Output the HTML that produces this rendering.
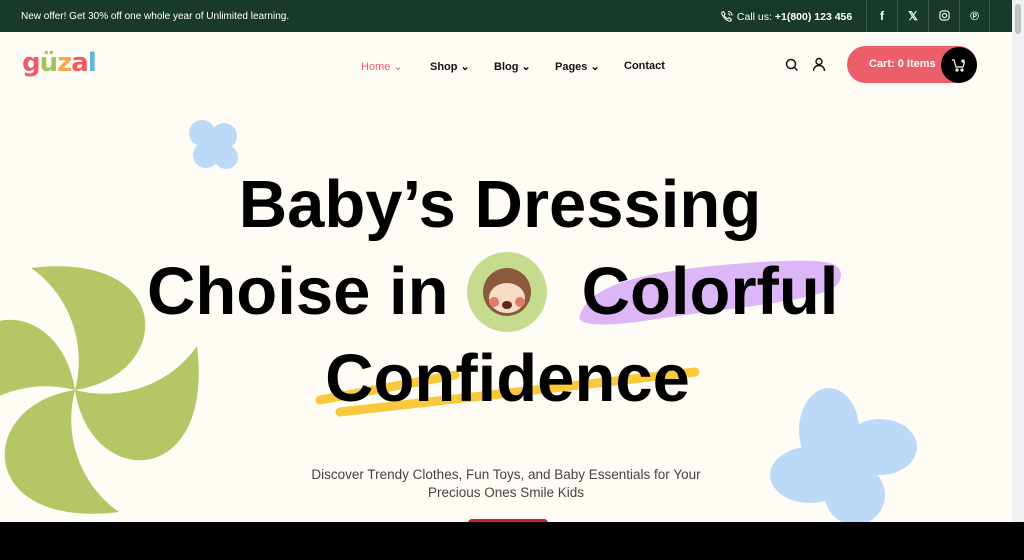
<!DOCTYPE html>
<html><head><meta charset="utf-8"><style>
*{margin:0;padding:0;box-sizing:border-box}
body{width:1024px;height:560px;overflow:hidden;background:#fffcf6;font-family:"Liberation Sans",sans-serif;position:relative}
.top{position:absolute;left:0;top:0;width:1012px;height:32px;background:#173a2a;color:#fff;font-size:10px}
.top .offer{position:absolute;left:21px;top:11px}
.top .call{position:absolute;left:720px;top:10px;font-size:10.5px}
.soc{position:absolute;top:0;width:31px;height:32px;border-left:1px solid #3d5a4c;color:#fff;text-align:center;line-height:32px;font-size:12px;font-weight:bold}
.sb{position:absolute;right:0;top:0;width:12px;height:522px;background:#f1f1f1}
.sb div{position:absolute;left:3px;top:4px;width:6px;height:30px;background:#c1c1c1;border-radius:3px}
.nav a{position:absolute;top:60px;font-size:11px;font-weight:bold;color:#111}
.h{position:absolute;font-weight:bold;font-size:67px;line-height:80px;color:#000;font-family:"Liberation Sans",sans-serif;white-space:nowrap}
.sub{position:absolute;left:0;width:1012px;top:466px;text-align:center;font-size:13.5px;color:#444;line-height:18px}
.bot{position:absolute;left:0;top:522px;width:1024px;height:38px;background:#000}
</style></head><body>
<div class="top"><span class="offer">New offer! Get 30% off one whole year of Unlimited learning.</span>
<span class="call"><svg width="14" height="13" viewBox="0 0 14 14" style="vertical-align:-3px" fill="none" stroke="#fff" stroke-width="1.1"><path d="M3 1.5l2 2.5-1.2 1.5c.8 1.8 2.2 3.2 4 4l1.5-1.2 2.5 2-1.3 1.8C6.5 12 2 7.5 1.2 2.8z"/><path d="M8 1.5a4.5 4.5 0 0 1 4.5 4.5M8 4a2 2 0 0 1 2 2"/></svg> Call us: <b>+1(800) 123 456</b></span>
<div class="soc" style="left:866px">f</div><div class="soc" style="left:897px">𝕏</div>
<div class="soc" style="left:928px"><svg width="11" height="11" viewBox="0 0 12 12" fill="none" stroke="#fff" stroke-width="1.2" style="margin-top:10px"><rect x="1" y="1" width="10" height="10" rx="3"/><circle cx="6" cy="6" r="2.3"/></svg></div>
<div class="soc" style="left:959px;border-right:1px solid #3d5a4c">℗</div></div>
<div class="sb"><div></div></div>
<div style="position:absolute;left:22px;top:48px;font-size:26px;font-weight:bold;font-family:'DejaVu Sans',sans-serif;letter-spacing:-1px"><span style="color:#ee5b6a">g</span><span style="color:#a6c25a">ü</span><span style="color:#f7a94a">z</span><span style="color:#ef5a5f">a</span><span style="color:#5cb5e3">l</span></div>
<div class="nav"><a style="left:361px;color:#ee5b6a;font-weight:normal">Home ⌄</a><a style="left:430px">Shop ⌄</a><a style="left:494px">Blog ⌄</a><a style="left:555px">Pages ⌄</a><a style="left:624px">Contact</a></div>
<svg style="position:absolute;left:785px;top:58px" width="14" height="14" viewBox="0 0 14 14" fill="none" stroke="#111" stroke-width="1.5"><circle cx="6" cy="6" r="4.5"/><path d="M9.5 9.5l3 3"/></svg>
<svg style="position:absolute;left:812px;top:57px" width="14" height="15" viewBox="0 0 14 15" fill="none" stroke="#111" stroke-width="1.4"><circle cx="7" cy="4.5" r="3"/><path d="M1.5 14c0-3.5 2.5-5.5 5.5-5.5s5.5 2 5.5 5.5"/></svg>
<div style="position:absolute;left:847px;top:46px;width:130px;height:37px;border-radius:19px;background:#ec5e69;color:#fff;font-size:11px;font-weight:bold;line-height:37px;padding-left:22px">Cart: 0 Items</div>
<div style="position:absolute;left:941px;top:47px;width:36px;height:36px;border-radius:50%;background:#000"><svg width="16" height="14" viewBox="0 0 16 14" fill="none" stroke="#fff" stroke-width="1.2" style="margin:11px 10px"><path d="M1 2h2l2 7h7l1.5-5"/><circle cx="6" cy="12" r="1"/><circle cx="11" cy="12" r="1"/><path d="M12 1v4M10 3h4"/></svg></div>
<svg style="position:absolute;left:0;top:0" width="1012" height="522">
<g fill="#bcd9f7"><circle cx="202" cy="133" r="13"/><circle cx="224" cy="136" r="13"/><circle cx="206" cy="155" r="13"/><circle cx="226" cy="157" r="12"/><circle cx="214" cy="146" r="14"/></g>
<g fill="#bcd9f7"><ellipse cx="829" cy="430" rx="30" ry="42"/><ellipse cx="880" cy="447" rx="37" ry="28"/><ellipse cx="810" cy="475" rx="40" ry="28"/><ellipse cx="855" cy="495" rx="30" ry="30"/><circle cx="842" cy="462" r="35"/></g>
<g fill="#b5c667" transform="translate(75,390)">
<path id="bl" d="M0,0 C100,-15 100,-140 -44,-122 C-5,-95 12,-45 0,0Z"/>
<use href="#bl" transform="rotate(90)"/>
<use href="#bl" transform="rotate(180)"/>
<use href="#bl" transform="rotate(270)"/>
</g>
<path d="M580,315 C590,285 640,270 760,262 C830,258 845,262 840,280 C835,300 750,305 650,320 C600,328 575,325 580,315Z" fill="#dcb6f7"/>
<path d="M320,400 L455,375 M340,412 L695,372" stroke="#f8c93a" stroke-width="9" stroke-linecap="round"/>
<circle cx="507" cy="292" r="40" fill="#c5dc8f"/>
<circle cx="507" cy="292" r="24" fill="#8b5a3c"/><ellipse cx="507" cy="298" rx="18" ry="15" fill="#f6dcc6"/>
<circle cx="494" cy="302" r="5" fill="#e27a68"/><circle cx="520" cy="302" r="5" fill="#e27a68"/><ellipse cx="507" cy="305" rx="5" ry="4" fill="#5a2a1a"/>
</svg>
<div class="h" style="top:165px;left:0;width:1000px;text-align:center">Baby’s Dressing</div>
<div class="h" style="top:252px;left:147px;width:298px;text-align:center">Choise in</div>
<div class="h" style="top:252px;left:578px;width:264px;text-align:center">Colorful</div>
<div class="h" style="top:339px;left:310px;width:395px;text-align:center">Confidence</div>
<div class="sub">Discover Trendy Clothes, Fun Toys, and Baby Essentials for Your<br>Precious Ones Smile Kids</div>
<div style="position:absolute;left:468px;top:519px;width:80px;height:6px;border-radius:4px 4px 0 0;background:#c8202a"></div>
<div class="bot"></div>
</body></html>
